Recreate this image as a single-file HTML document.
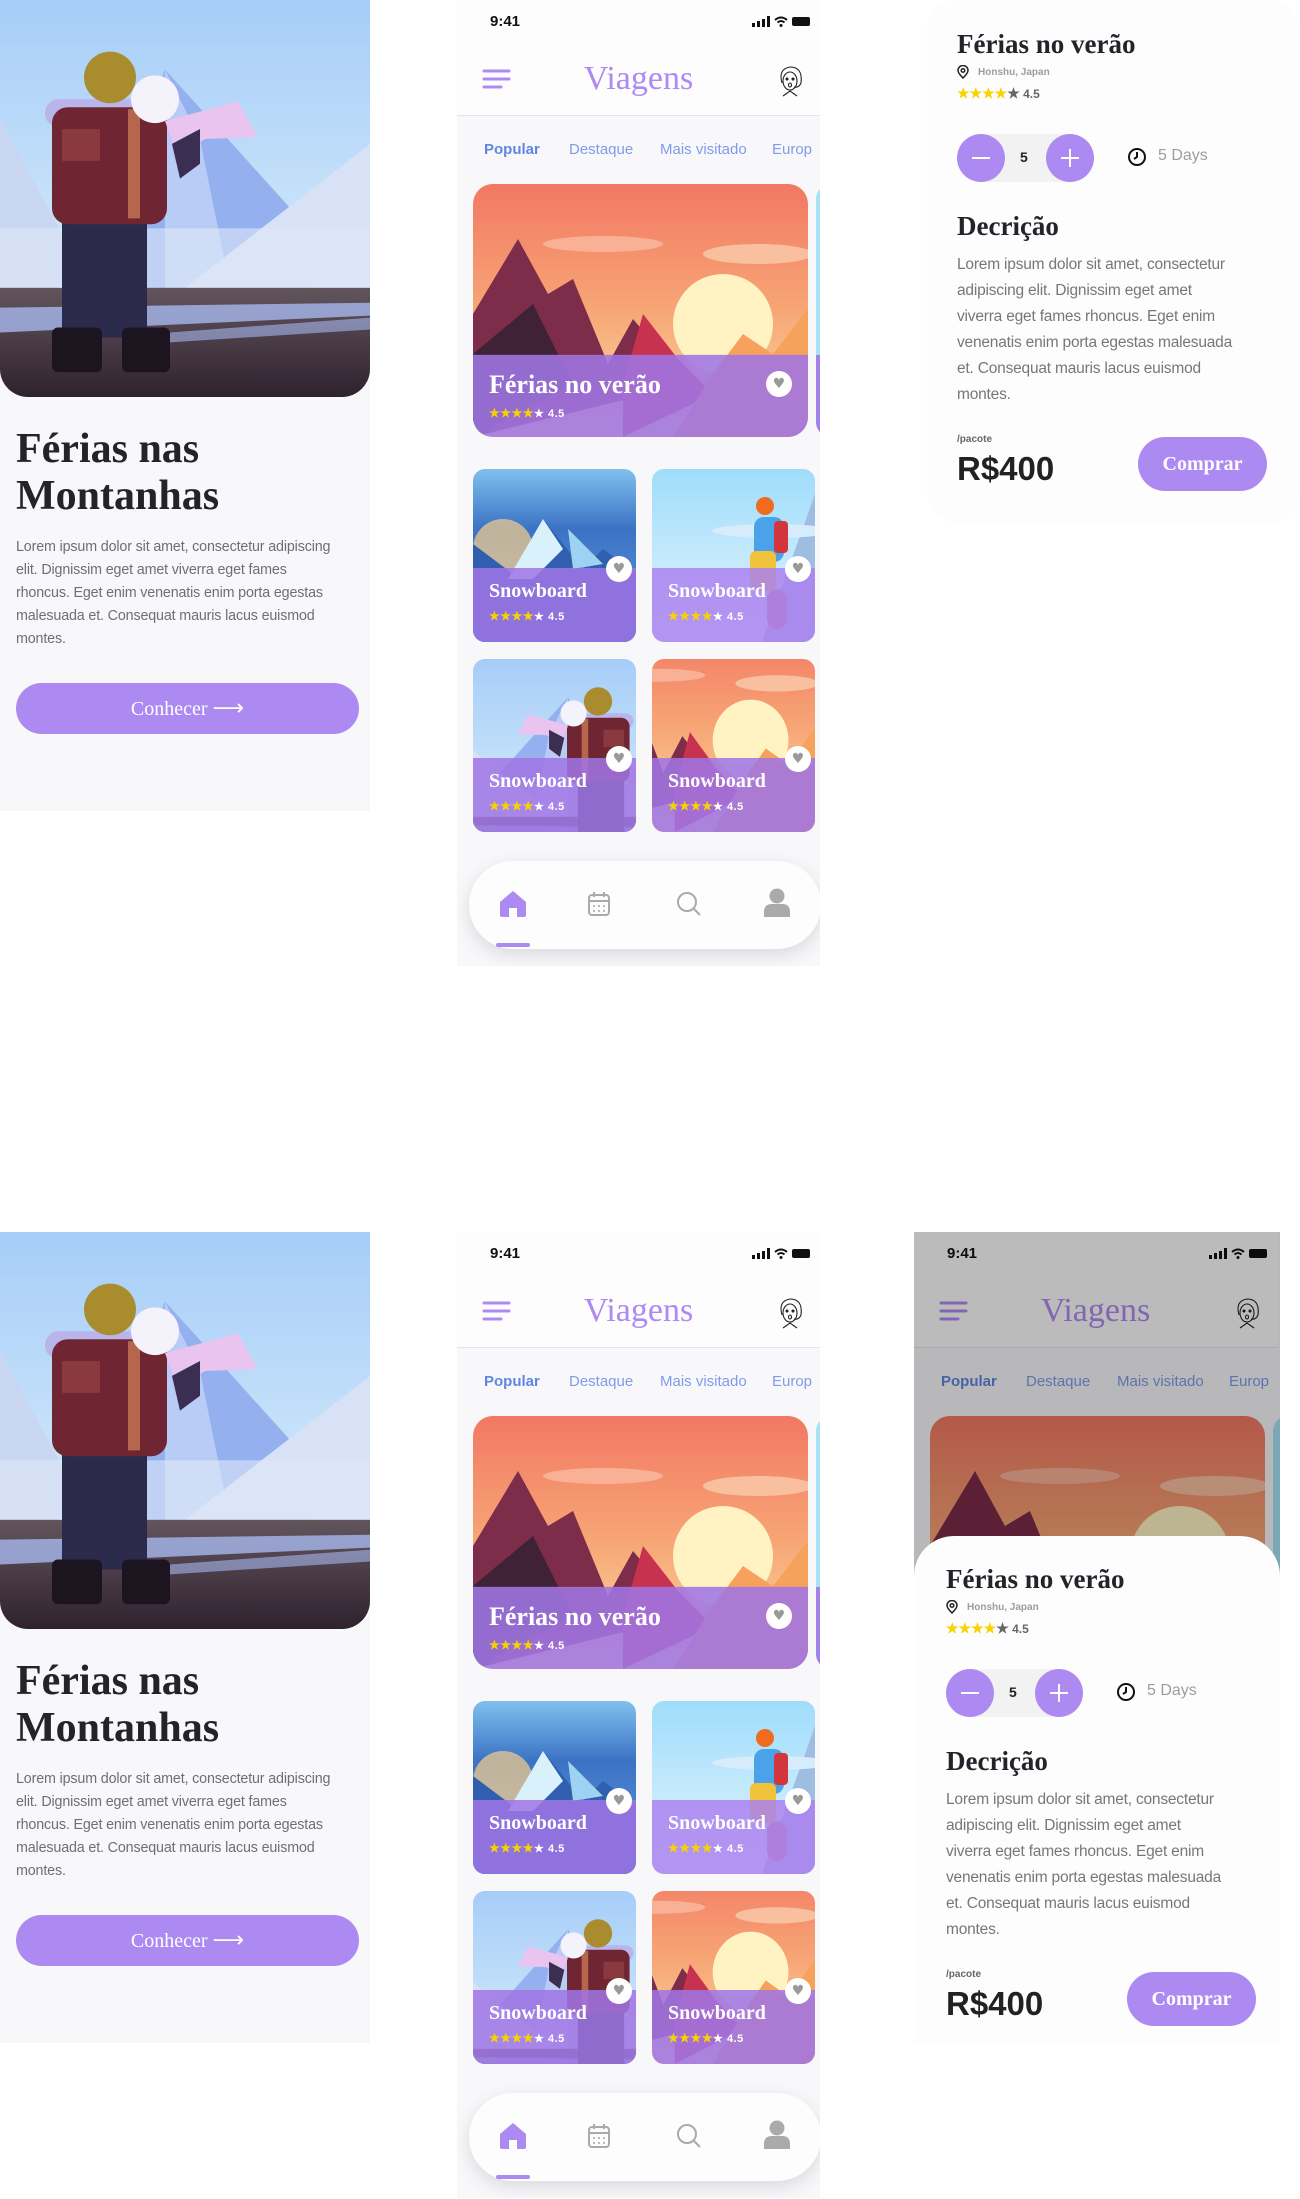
<!DOCTYPE html>
<html><head><meta charset="utf-8">
<style>
*{margin:0;padding:0;box-sizing:border-box}
body{width:1300px;height:2199px;background:#fff;position:relative;overflow:hidden;font-family:"Liberation Sans",sans-serif}
.abs{position:absolute;white-space:nowrap}
.p1{position:absolute;left:0;width:370px;height:811px;background:#f8f8fb}
.hero{position:absolute;left:0;top:0;width:370px;height:397px;border-radius:0 0 28px 28px;overflow:hidden}
.h1{position:absolute;left:16px;top:426px;font:700 42px/47px "Liberation Serif",serif;color:#25232a}
.para{position:absolute;left:16px;top:536px;font:14.3px/23px "Liberation Sans",sans-serif;color:#6e6e74;letter-spacing:-0.15px;white-space:nowrap}
.btn1{position:absolute;left:16px;top:683px;width:343px;height:51px;border-radius:26px;background:#ad8af2;color:#fff;font:20px/51px "Liberation Serif",serif;text-align:center}
.phone{position:absolute;width:363px;height:966px;background:#f8f8fb;overflow:hidden}
.hdr{position:absolute;left:0;top:0;width:363px;height:116px;background:#fdfdfe;border-bottom:1px solid #e4e4e8}
.time{position:absolute;left:33px;top:13px;font:700 15px "Liberation Sans",sans-serif;color:#111}
.title{position:absolute;left:0;width:363px;top:60px;text-align:center;font:34px "Liberation Serif",serif;color:#ad8af2}
.tabs span{position:absolute;top:141px;font:15px "Liberation Sans",sans-serif;color:#7f9cea;white-space:nowrap}
.card{position:absolute;overflow:hidden;border-radius:16px}
.band{position:absolute;left:0;right:0;bottom:0;background:rgba(160,118,228,.86)}
.ct{position:absolute;color:#fff;font-family:"Liberation Serif",serif;font-weight:700;white-space:nowrap}
.st{position:absolute;font:700 11px "Liberation Sans",sans-serif;color:#fff;letter-spacing:0.5px;white-space:nowrap}
.st b{color:#f7d400;font-size:12px}
.heart{position:absolute;width:26px;height:26px;border-radius:50%;background:#fff;color:#999;font:14px/26px "DejaVu Sans",sans-serif;text-align:center}
.nav{position:absolute;left:12px;top:861px;width:352px;height:88px;border-radius:44px;background:#fdfdfe;box-shadow:0 6px 18px rgba(0,0,0,.12)}
.det{position:absolute;width:330px}
.det div{white-space:nowrap}
.det .t{position:absolute;left:0;top:29px;font:700 27px "Liberation Serif",serif;color:#25232a}
.det .loc{position:absolute;left:21px;top:67px;font:700 10px "Liberation Sans",sans-serif;color:#9d9d9d}
.det .rt{position:absolute;left:0;top:85px;font:700 12px "Liberation Sans",sans-serif;color:#666}
.det .rt b{color:#f7d400;font-size:14px}
.cnt{position:absolute;left:0;top:134px;width:137px;height:48px;border-radius:24px;background:#f2f2f2}
.cb{position:absolute;top:0;width:48px;height:48px;border-radius:50%;background:#ad8af2}
.det .d{position:absolute;left:0;top:211px;font:700 27px "Liberation Serif",serif;color:#25232a}
.det .dp{position:absolute;left:0;top:252px;font:15.5px/26px "Liberation Sans",sans-serif;color:#777;letter-spacing:-0.2px}
.det .pc{position:absolute;left:0;top:434px;font:700 10px "Liberation Sans",sans-serif;color:#666}
.det .pr{position:absolute;left:0;top:450px;font:700 33px "Liberation Sans",sans-serif;color:#222}
.det .buy{position:absolute;left:181px;top:437px;width:129px;height:54px;border-radius:27px;background:#ad8af2;color:#fff;font:700 20px/54px "Liberation Serif",serif;text-align:center}
</style></head><body>

<svg width="0" height="0" style="position:absolute">
<defs>
<linearGradient id="sky" x1="0" y1="0" x2="0" y2="1"><stop offset="0" stop-color="#a6cdf8"/><stop offset="1" stop-color="#e4f4fb"/></linearGradient>
<linearGradient id="gr" x1="0" y1="0" x2="0" y2="1"><stop offset="0" stop-color="#62555c"/><stop offset="1" stop-color="#2f2230"/></linearGradient>
<linearGradient id="sun" x1="0" y1="0" x2="0" y2="1"><stop offset="0" stop-color="#f27863"/><stop offset=".5" stop-color="#f7a676"/><stop offset="1" stop-color="#fbe0a6"/></linearGradient>
<linearGradient id="nt" x1="0" y1="0" x2="0" y2="1"><stop offset="0" stop-color="#7fc0ee"/><stop offset=".35" stop-color="#3b72c4"/><stop offset="1" stop-color="#6aa0dc"/></linearGradient>
<linearGradient id="lb" x1="0" y1="0" x2="0" y2="1"><stop offset="0" stop-color="#9fdcfb"/><stop offset="1" stop-color="#e6f6fd"/></linearGradient>
<symbol id="hiker" viewBox="0 0 370 400" preserveAspectRatio="none">
<rect width="370" height="400" fill="url(#sky)"/>
<polygon points="165,70 295,215 310,290 90,290 110,220" fill="#94b0ef"/>
<polygon points="165,70 200,140 230,290 165,290" fill="#b8ccf6"/>
<polygon points="370,145 370,290 185,290" fill="#d7e2f6"/>
<polygon points="0,120 75,260 60,290 0,290" fill="#c9d6f2"/>
<rect y="230" width="370" height="60" fill="#dfe8f8" opacity=".6"/>
<rect y="290" width="370" height="110" fill="url(#gr)"/>
<polygon points="0,310 370,305 370,318 0,335" fill="#a8b8ee" opacity=".8"/>
<polygon points="170,335 370,320 370,332 170,345" fill="#a8b8ee" opacity=".6"/>
<rect x="62" y="215" width="85" height="125" rx="10" fill="#2b2a4c"/>
<rect x="52" y="330" width="50" height="45" rx="6" fill="#1c1520"/>
<rect x="122" y="330" width="48" height="45" rx="6" fill="#1c1520"/>
<rect x="45" y="100" width="125" height="28" rx="14" fill="#b9b4ea"/>
<rect x="52" y="108" width="115" height="118" rx="16" fill="#6f2632"/>
<rect x="62" y="130" width="38" height="32" fill="#8a3a3e"/>
<rect x="128" y="110" width="12" height="110" fill="#b5664d"/>
<circle cx="155" cy="100" r="24" fill="#f4f2fb"/>
<polygon points="165,122 238,102 258,138 205,140 178,158" fill="#e9c4ee"/>
<polygon points="172,145 200,130 200,165 180,180" fill="#3a2e52"/>
<circle cx="110" cy="78" r="26" fill="#a98c2e"/>
</symbol>
<symbol id="sunset" viewBox="0 0 335 253" preserveAspectRatio="none">
<rect width="335" height="253" fill="url(#sun)"/>
<ellipse cx="130" cy="60" rx="60" ry="8" fill="#f9b196"/><ellipse cx="285" cy="70" rx="55" ry="10" fill="#f9c0a0"/>
<circle cx="250" cy="140" r="50" fill="#fff3c4"/>
<polygon points="0,130 45,55 75,110 100,95 135,180 160,135 215,200 0,253" fill="#7d2c4a"/>
<polygon points="0,170 60,120 100,200 0,253" fill="#3f2236"/>
<polygon points="150,200 170,130 205,175 240,210 150,253" fill="#c7324f"/>
<polygon points="200,253 240,190 270,150 300,170 335,125 335,253" fill="#f6a25d"/>
<rect y="170" width="335" height="83" fill="#b27adf" opacity=".15"/>
</symbol>
<symbol id="night" viewBox="0 0 163 173" preserveAspectRatio="none">
<rect width="163" height="173" fill="url(#nt)"/>
<circle cx="30" cy="80" r="30" fill="#f8cf8a" opacity=".7"/>
<polygon points="0,75 40,105 70,50 110,100 130,80 163,105 163,173 0,173" fill="#2f5fae"/>
<polygon points="35,110 70,50 90,80 60,110" fill="#d8f1fb"/>
<polygon points="95,60 130,95 100,100" fill="#9ed2f2"/>
</symbol>
<symbol id="snow" viewBox="0 0 163 173" preserveAspectRatio="none">
<rect width="163" height="173" fill="url(#lb)"/>
<polygon points="163,25 163,173 110,173" fill="#9ebde0"/>
<ellipse cx="120" cy="62" rx="60" ry="7" fill="#d6ecfa"/>
<rect x="102" y="48" width="30" height="45" rx="10" fill="#4aa3e8"/>
<rect x="122" y="52" width="14" height="32" rx="4" fill="#d2363c"/>
<circle cx="113" cy="37" r="9" fill="#f26a1b"/>
<rect x="98" y="82" width="26" height="40" rx="6" fill="#f2c23a"/>
<rect x="115" y="120" width="20" height="40" rx="10" fill="#d26a7a"/>
</symbol>
</defs>
</svg>

<div class="p1" style="top:0">
 <div class="hero"><svg width="370" height="397"><use href="#hiker"/></svg></div>
 <div class="h1">Férias nas<br>Montanhas</div>
 <div class="para">Lorem ipsum dolor sit amet, consectetur adipiscing<br>elit. Dignissim eget amet viverra eget fames<br>rhoncus. Eget enim venenatis enim porta egestas<br>malesuada et. Consequat mauris lacus euismod<br>montes.</div>
 <div class="btn1">Conhecer <span style="font-family:'DejaVu Sans';font-size:22px">⟶</span></div>
</div>
<div class="p1" style="top:1232px">
 <div class="hero"><svg width="370" height="397"><use href="#hiker"/></svg></div>
 <div class="h1">Férias nas<br>Montanhas</div>
 <div class="para">Lorem ipsum dolor sit amet, consectetur adipiscing<br>elit. Dignissim eget amet viverra eget fames<br>rhoncus. Eget enim venenatis enim porta egestas<br>malesuada et. Consequat mauris lacus euismod<br>montes.</div>
 <div class="btn1">Conhecer <span style="font-family:'DejaVu Sans';font-size:22px">⟶</span></div>
</div>

<div id="ph1" class="phone" style="left:457px;top:0">
 <div class="hdr">
  <div class="time">9:41</div>
  <svg class="abs" style="left:295px;top:16px" width="60" height="12"><rect x="0" y="7" width="3" height="4" fill="#111"/><rect x="5" y="5" width="3" height="6" fill="#111"/><rect x="10" y="3" width="3" height="8" fill="#111"/><rect x="15" y="0" width="3" height="11" fill="#111"/><path d="M23 4 Q29 -1 35 4 M25.5 6.5 Q29 3.5 32.5 6.5" stroke="#111" stroke-width="2" fill="none"/><circle cx="29" cy="9.5" r="1.5" fill="#111"/><rect x="40" y="1" width="18" height="9" rx="2" fill="#111"/></svg>
  <svg class="abs" style="left:25px;top:68px" width="30" height="22"><g stroke="#ad8af2" stroke-width="3" stroke-linecap="round"><line x1="2" y1="3" x2="27" y2="3"/><line x1="2" y1="11" x2="27" y2="11"/><line x1="2" y1="19" x2="19" y2="19"/></g></svg>
  <div class="title">Viagens</div>
  <svg class="abs" style="left:317px;top:63px" width="34" height="36"><g fill="none" stroke="#222" stroke-width="1.1"><path d="M8 20 Q4 6 16 4 Q29 4 27 20 Q25 25 20 24"/><ellipse cx="16" cy="18" rx="7" ry="9"/><circle cx="13" cy="16" r="1" fill="#222"/><circle cx="19" cy="16" r="1" fill="#222"/><ellipse cx="16" cy="22" rx="1.5" ry="2"/><path d="M9 33 L16 28 L23 33"/></g></svg>
 </div>
 <div class="tabs"><span style="left:27px;font-weight:700;color:#5f86e2">Popular</span><span style="left:112px">Destaque</span><span style="left:203px">Mais visitado</span><span style="left:315px">Europ</span></div>
 <div class="card" style="left:16px;top:184px;width:335px;height:253px;border-radius:20px">
  <svg width="335" height="253"><use href="#sunset"/></svg>
  <div class="band" style="height:82px"></div>
  <div class="ct" style="left:16px;top:186px;font-size:26px">Férias no verão</div>
  <div class="st" style="left:16px;top:222px"><b>★★★★</b>★ 4.5</div>
  <div class="heart" style="left:293px;top:187px">♥</div>
 </div>
 <div class="card" style="left:359px;top:184px;width:30px;height:253px;background:#a6e3f7"><div class="band" style="height:82px"></div></div>
 <div class="card" style="left:16px;top:469px;width:163px;height:173px;border-radius:12px"><svg width="163" height="173"><use href="#night"/></svg><div class="band" style="height:74px"></div><div class="ct" style="left:16px;top:111px;font-size:20px">Snowboard</div><div class="st" style="left:16px;top:140px"><b>★★★★</b>★ 4.5</div><div class="heart" style="left:133px;top:87px">♥</div></div>
 <div class="card" style="left:195px;top:469px;width:163px;height:173px;border-radius:12px"><svg width="163" height="173"><use href="#snow"/></svg><div class="band" style="height:74px;background:rgba(170,130,240,.85)"></div><div class="ct" style="left:16px;top:111px;font-size:20px">Snowboard</div><div class="st" style="left:16px;top:140px"><b>★★★★</b>★ 4.5</div><div class="heart" style="left:133px;top:87px">♥</div></div>
 <div class="card" style="left:16px;top:659px;width:163px;height:173px;border-radius:12px"><svg width="163" height="173" viewBox="30 0 300 318" preserveAspectRatio="xMidYMid slice"><use href="#hiker" width="370" height="400" transform="translate(370,0) scale(-1,1)"/></svg><div class="band" style="height:74px"></div><div class="ct" style="left:16px;top:111px;font-size:20px">Snowboard</div><div class="st" style="left:16px;top:140px"><b>★★★★</b>★ 4.5</div><div class="heart" style="left:133px;top:87px">♥</div></div>
 <div class="card" style="left:195px;top:659px;width:163px;height:173px;border-radius:12px"><svg width="163" height="173" viewBox="120 40 215 213" preserveAspectRatio="none"><use href="#sunset" width="335" height="253"/></svg><div class="band" style="height:74px"></div><div class="ct" style="left:16px;top:111px;font-size:20px">Snowboard</div><div class="st" style="left:16px;top:140px"><b>★★★★</b>★ 4.5</div><div class="heart" style="left:133px;top:87px">♥</div></div>
 <div class="nav">
  <svg class="abs" style="left:30px;top:29px" width="28" height="28"><path d="M14 1 L27 12 L27 25 Q27 27 25 27 L18 27 L18 18 L10 18 L10 27 L3 27 Q1 27 1 25 L1 12 Z" fill="#ad8af2"/></svg>
  <svg class="abs" style="left:118px;top:30px" width="24" height="26" fill="none" stroke="#aaa" stroke-width="2"><rect x="2" y="4" width="20" height="20" rx="3"/><line x1="2" y1="10" x2="22" y2="10"/><line x1="7" y1="1" x2="7" y2="6"/><line x1="17" y1="1" x2="17" y2="6"/><g stroke-width="1.6"><line x1="6" y1="15" x2="8" y2="15"/><line x1="11" y1="15" x2="13" y2="15"/><line x1="16" y1="15" x2="18" y2="15"/><line x1="6" y1="20" x2="8" y2="20"/><line x1="11" y1="20" x2="13" y2="20"/><line x1="16" y1="20" x2="18" y2="20"/></g></svg>
  <svg class="abs" style="left:207px;top:30px" width="26" height="26" fill="none" stroke="#aaa" stroke-width="2"><circle cx="11" cy="11" r="9"/><line x1="18" y1="18" x2="24" y2="24"/></svg>
  <svg class="abs" style="left:294px;top:27px" width="28" height="30"><circle cx="14" cy="8" r="7.5" fill="#aaa"/><path d="M1 29 L1 24 Q1 16 9 16 L19 16 Q27 16 27 24 L27 29 Z" fill="#aaa"/></svg>
  <div class="abs" style="left:27px;top:82px;width:34px;height:4px;border-radius:2px;background:#ad8af2"></div>
 </div>
</div>

<div class="abs" style="left:927px;top:0;width:373px;height:523px;background:#fdfdfd;border-radius:30px"></div>
<div class="det" style="left:957px;top:0">
 <div class="t">Férias no verão</div>
 <svg class="abs" style="left:0;top:65px" width="12" height="14" fill="none" stroke="#222" stroke-width="1.5"><path d="M6 13 Q1 8 1 5.5 A5 5 0 0 1 11 5.5 Q11 8 6 13Z"/><circle cx="6" cy="5.5" r="1.8"/></svg>
 <div class="loc">Honshu, Japan</div>
 <div class="rt"><b>★★★★</b><span style="font-size:14px">★</span> 4.5</div>
 <div class="cnt"><div class="cb" style="left:0"><div class="abs" style="left:15px;top:23px;width:18px;height:2px;background:#fff"></div></div><div class="abs" style="left:63px;top:15px;font:700 14px 'Liberation Sans';color:#222">5</div><div class="cb" style="left:89px"><div class="abs" style="left:15px;top:23px;width:18px;height:2px;background:#fff"></div><div class="abs" style="left:23px;top:15px;width:2px;height:18px;background:#fff"></div></div></div>
 <svg class="abs" style="left:170px;top:147px" width="20" height="20" fill="none" stroke="#111" stroke-width="2"><circle cx="10" cy="10" r="8"/><path d="M10 5 L10 10 L7 12"/></svg>
 <div class="abs" style="left:201px;top:147px;font:16px 'Liberation Sans';color:#9d9d9d">5 Days</div>
 <div class="d">Decrição</div>
 <div class="dp">Lorem ipsum dolor sit amet, consectetur<br>adipiscing elit. Dignissim eget amet<br>viverra eget fames rhoncus. Eget enim<br>venenatis enim porta egestas malesuada<br>et. Consequat mauris lacus euismod<br>montes.</div>
 <div class="pc">/pacote</div>
 <div class="pr">R$400</div>
 <div class="buy">Comprar</div>
</div>

<div id="ph2" class="phone" style="left:457px;top:1232px"></div>
<div id="ph3" class="phone" style="left:914px;top:1232px;width:366px;height:811px"></div>
<div class="abs" style="left:914px;top:1232px;width:366px;height:811px;background:rgba(0,0,0,.26)"></div>
<div class="abs" style="left:914px;top:1536px;width:366px;height:507px;background:#fdfdfd;border-radius:40px 40px 0 0"></div>
<div id="det2" class="det" style="left:946px;top:1535px"></div>

<script>
var s=document.getElementById('ph1').innerHTML;
document.getElementById('ph2').innerHTML=s;
document.getElementById('ph3').innerHTML=s;
document.getElementById('det2').innerHTML=document.querySelector('.det').innerHTML;
</script>
</body></html>
